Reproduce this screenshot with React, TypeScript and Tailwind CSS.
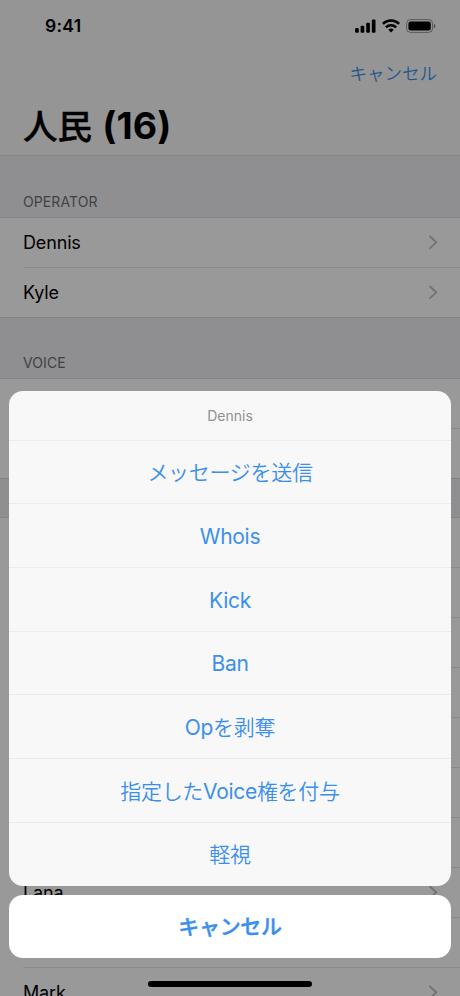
import clsx from 'clsx';

interface Section {
  title: string;
  people: string[];
  headerClass: string;
}

const SECTIONS: Section[] = [
  { title: 'Operator', people: ['Dennis', 'Kyle'], headerClass: 'h-[62px]' },
  { title: 'Voice', people: ['', ''], headerClass: 'h-[61px]' },
  { title: '', people: ['', '', '', '', '', '', '', 'Lana', '', 'Mark'], headerClass: 'h-[39px]' },
];

const ACTIONS = ['メッセージを送信', 'Whois', 'Kick', 'Ban', 'Opを剥奪', '指定したVoice権を付与', '軽視'];

// Latin runs keep the regular weight, Japanese runs are set lighter
function MixedText({ text }: { text: string }) {
  return (
    <>
      {text.split(/([A-Za-z]+)/).filter(Boolean).map((run, i) => (
        <span key={i} className={/[A-Za-z]/.test(run) ? 'font-normal' : 'font-[350]'}>{run}</span>
      ))}
    </>
  );
}

function StatusBar() {
  return (
    <div className="flex h-[51px] shrink-0 items-center justify-between pl-[45px] pr-6">
      <span className="text-[17.5px] font-semibold leading-6 tracking-[0.3px]">9:41</span>
      <div className="flex items-center gap-[6px]">
        <svg width="22" height="14" viewBox="0 0 22 14">
          <rect x="1.1" y="9" width="3.7" height="4.8" rx="1.1" />
          <rect x="6.6" y="6.7" width="3.7" height="7.1" rx="1.1" />
          <rect x="12.2" y="3.8" width="3.7" height="10" rx="1.1" />
          <rect x="17.8" y="0.6" width="3.7" height="13.2" rx="1.1" />
        </svg>
        <svg width="18" height="14" viewBox="0 0 18 14" fill="none" stroke="black" strokeWidth="2.5">
          <path d="M0.9 4.9a11.5 11.5 0 0 1 16.2 0" />
          <path d="M3.9 8.3a7.3 7.3 0 0 1 10.2 0" />
          <path d="M9 13.4 6.3 10.7a3.9 3.9 0 0 1 5.4 0z" fill="black" stroke="none" />
        </svg>
        <svg width="30" height="14" viewBox="0 0 30 14">
          <rect x="0.6" y="0.6" width="26" height="12.8" rx="4" fill="none" stroke="black" strokeOpacity="0.4" />
          <rect x="2.4" y="2.4" width="22.4" height="9.2" rx="2.4" />
          <path d="M27.8 4.8v4.6c1-.4 1.6-1.3 1.6-2.3s-.6-1.9-1.6-2.3z" fillOpacity="0.45" />
        </svg>
      </div>
    </div>
  );
}

function Chevron() {
  return (
    <svg width="9" height="15" viewBox="0 0 9 15" fill="none" stroke="#bcbcc1" strokeWidth="1.8">
      <path d="M0.5 0.9 7.2 7.3 0.5 13.7" />
    </svg>
  );
}

function PersonRow({ name, last }: { name: string; last: boolean }) {
  return (
    <div className={clsx('flex h-[50px] shrink-0 bg-white pl-[23px]', last && 'border-b border-[#d8d8dc]')}>
      <div className={clsx('flex flex-1 items-center justify-between pr-[22px]', !last && 'border-b border-[#e7e7ea]')}>
        <span className="text-[18px] tracking-[-0.15px]">{name}</span>
        <Chevron />
      </div>
    </div>
  );
}

function ActionSheet() {
  return (
    <div className="absolute inset-x-[9px] top-[391px] flex flex-col gap-[9px] text-center text-[#3b8fec]">
      <div className="flex h-[494.5px] flex-col overflow-hidden rounded-[14px] bg-[#f8f8f8]">
        <div className="flex h-[48.5px] items-center justify-center text-[14px] text-[#919191]">Dennis</div>
        {ACTIONS.map((action) => (
          <button key={action} className="min-h-0 flex-1 border-t border-[#ebebec] pt-[2px] text-[21px] tracking-[-0.3px]">
            <MixedText text={action} />
          </button>
        ))}
      </div>
      <button className="h-[63.5px] rounded-[14px] bg-white text-[21px] font-medium tracking-[-0.3px] [-webkit-text-stroke:0.4px_#3b8fec]">キャンセル</button>
    </div>
  );
}

export default function App() {
  return (
    <div className="relative flex h-[996px] w-[460px] flex-col overflow-hidden bg-white font-[Inter,'Noto_Sans_CJK_JP',sans-serif] text-black" lang="ja">
      <header className="flex h-[156px] shrink-0 flex-col border-b border-[#dedee1] bg-[#f9f9f9]">
        <StatusBar />
        <div className="flex h-[46px] items-center justify-end pr-[23px] text-[17.5px] font-[350] text-[#3b8fec]">キャンセル</div>
        <h1 className="flex items-baseline gap-[10px] pl-[23px] text-[37.5px] font-bold leading-[57px] tracking-[0.1px]">
          <span className="text-[34.5px] font-medium [-webkit-text-stroke:0.4px_black]">人民</span>
          <span>(16)</span>
        </h1>
      </header>

      {SECTIONS.map((section) => (
        <section key={section.title} className="flex shrink-0 flex-col">
          <h2 className={clsx('flex shrink-0 items-end border-b border-[#dedee1] bg-[#efeff3] pb-[5px] pl-[23px] text-[14px] uppercase tracking-[0.1px] text-[#6d6d72]', section.headerClass)}>
            {section.title}
          </h2>
          {section.people.map((name, i) => (
            <PersonRow key={i} name={name} last={i === section.people.length - 1} />
          ))}
        </section>
      ))}

      <div className="absolute inset-0 bg-black/40" />
      <ActionSheet />
      <div className="absolute bottom-[9px] left-[148px] h-[6px] w-[164px] rounded-full bg-black" />
    </div>
  );
}
